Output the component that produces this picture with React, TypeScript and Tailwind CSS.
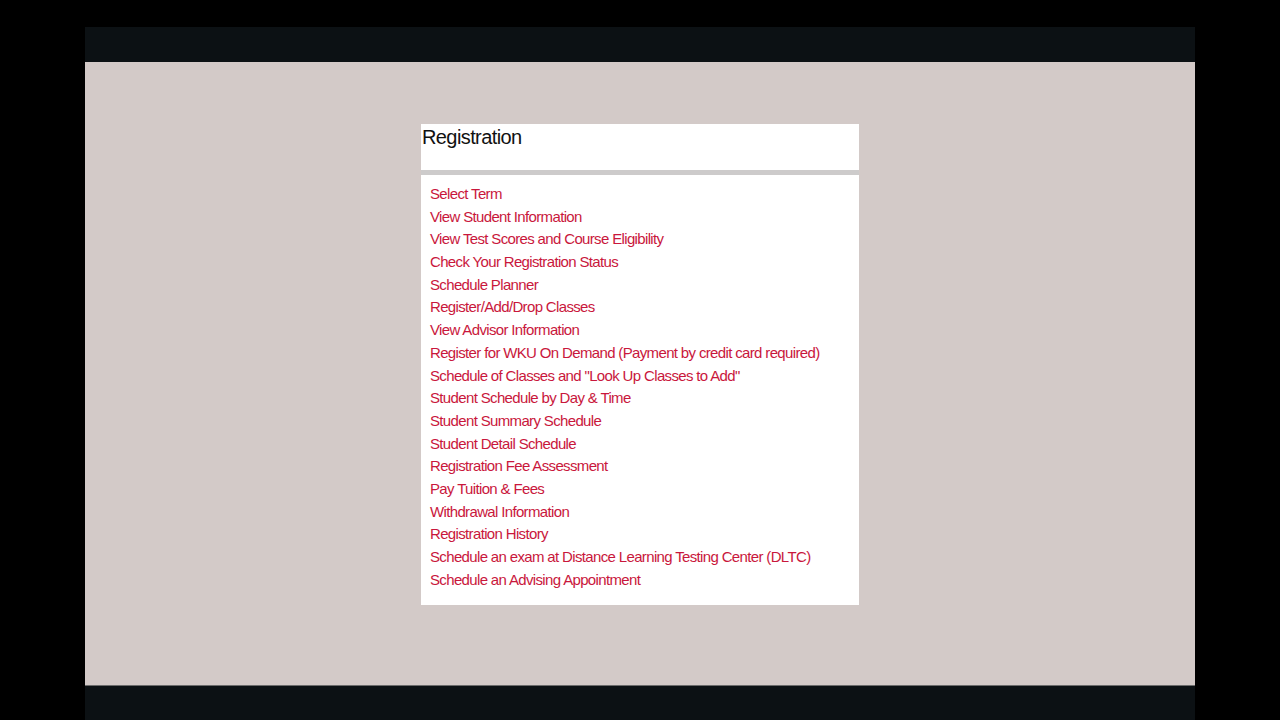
export default function App() {
  const links = [
    "Select Term",
    "View Student Information",
    "View Test Scores and Course Eligibility",
    "Check Your Registration Status",
    "Schedule Planner",
    "Register/Add/Drop Classes",
    "View Advisor Information",
    "Register for WKU On Demand (Payment by credit card required)",
    'Schedule of Classes and "Look Up Classes to Add"',
    "Student Schedule by Day & Time",
    "Student Summary Schedule",
    "Student Detail Schedule",
    "Registration Fee Assessment",
    "Pay Tuition & Fees",
    "Withdrawal Information",
    "Registration History",
    "Schedule an exam at Distance Learning Testing Center (DLTC)",
    "Schedule an Advising Appointment",
  ];

  return (
    <div className="flex h-[720px] w-[1280px] justify-center bg-black pt-[27px] font-['Liberation_Sans',Arial,sans-serif]">
      <div className="flex h-[693px] w-[1110px] flex-col">
        <div className="h-[35px] bg-[#0c1114]" />
        <div className="flex h-[623px] justify-center bg-[#d3cac8] pt-[62px]">
          <div className="flex h-[481px] w-[438px] flex-col">
            {/* Header */}
            <div className="h-[46px] bg-white pl-[1px] pt-[1px]">
              <h1 className="text-[20px] leading-[24px] tracking-[-0.6px] text-[#111]">
                Registration
              </h1>
            </div>
            <div className="h-[5px] bg-[#cdcbcb]" />
            {/* Links */}
            <ul className="flex-1 bg-white pl-[9px] pt-[8px]">
              {links.map((link, index) => (
                <li key={index} className="h-[22.7px] leading-[22.7px]">
                  <a
                    href="#"
                    className="text-[15px] tracking-[-0.65px] text-[#c9173c]"
                  >
                    {link}
                  </a>
                </li>
              ))}
            </ul>
          </div>
        </div>
        <div className="h-[35px] border-t border-[#6b6b6b] bg-[#0c1114]" />
      </div>
    </div>
  );
}
